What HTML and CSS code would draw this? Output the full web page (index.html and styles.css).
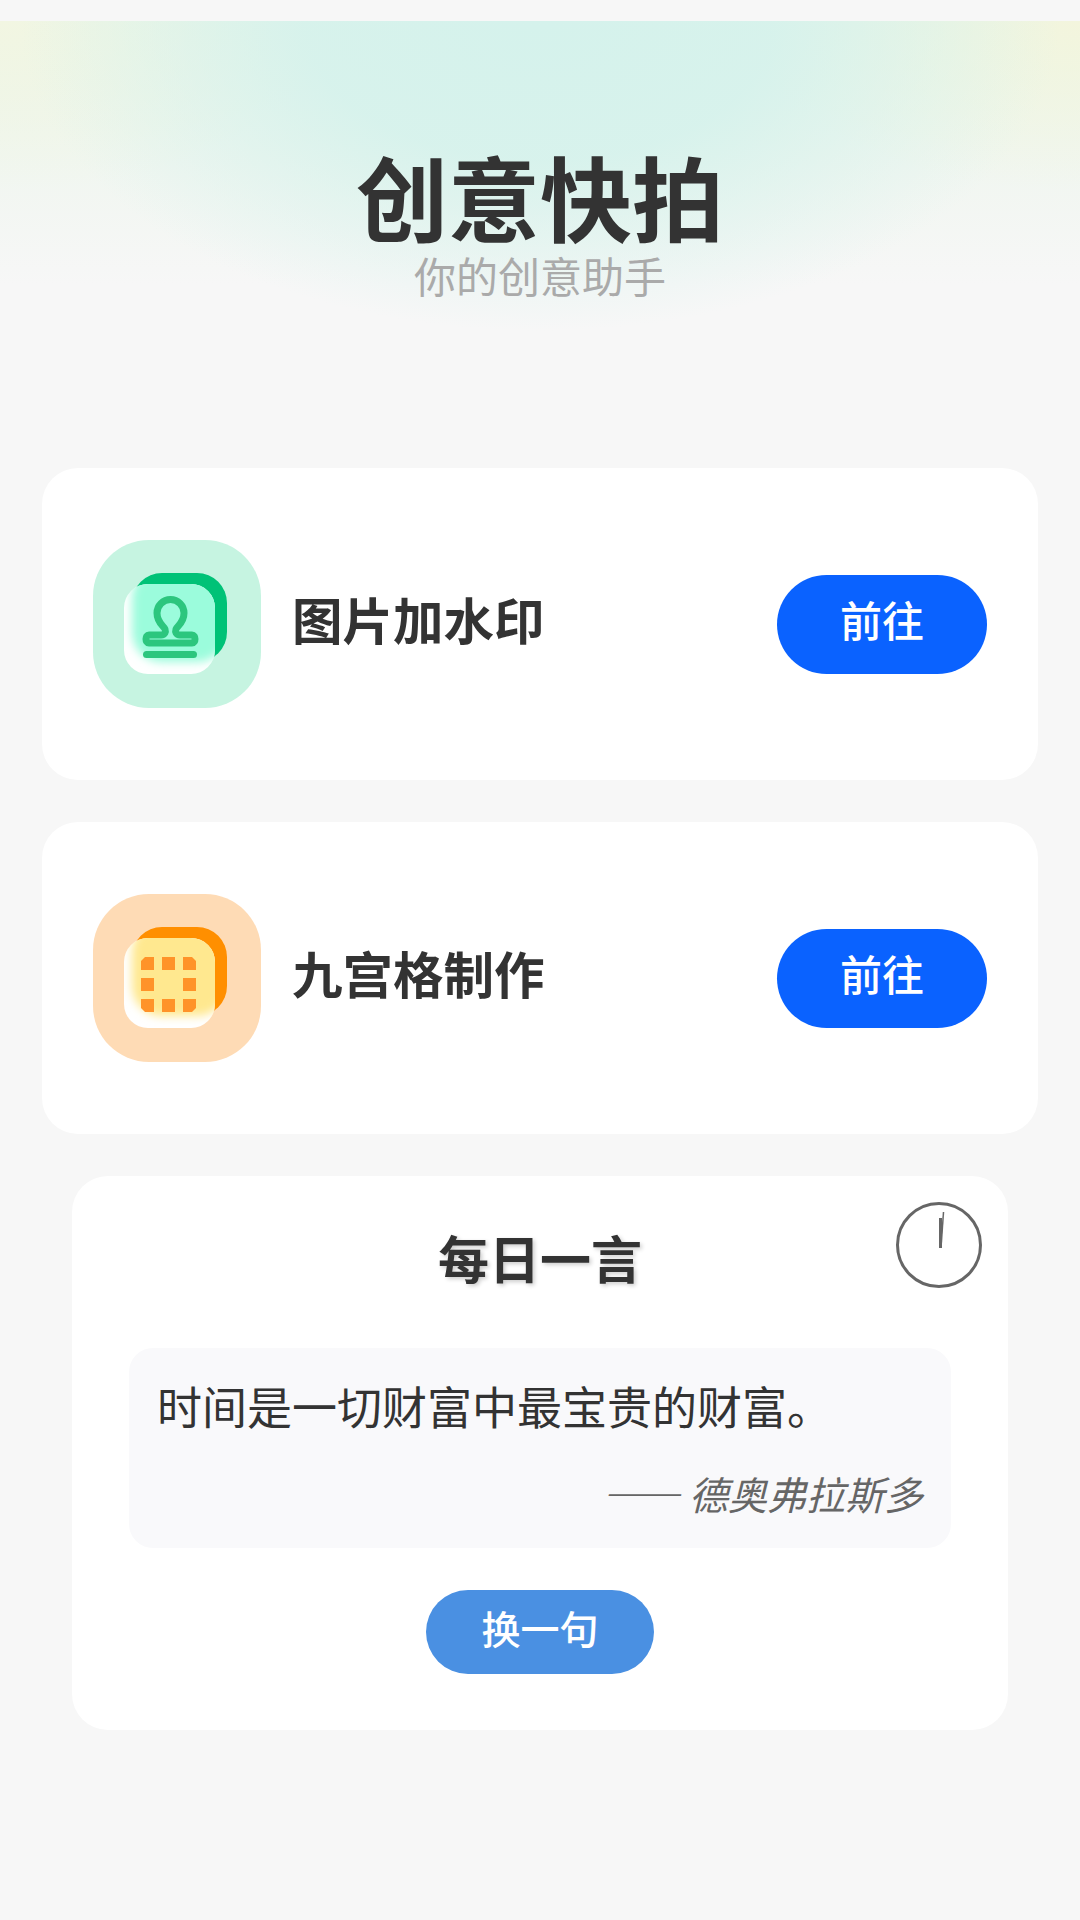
FILE: index.html
```html
<!DOCTYPE html>
<html lang="zh-CN">
<head>
    <meta charset="UTF-8">
    <meta name="viewport" content="width=device-width, initial-scale=1.0">
    <title>创意快拍</title>
    <link rel="stylesheet" href="styles.css">
</head>
<body>
    <div class="page">
        <header class="header">
            <h1 class="title">创意快拍</h1>
            <p class="subtitle">你的创意助手</p>
        </header>

        <section class="tool-card">
            <svg class="tool-icon" viewBox="0 0 168 168">
                <defs>
                    <clipPath id="frontClip"><rect x="31" y="44" width="91" height="90" rx="24"/></clipPath>
                    <filter id="soft" x="-20%" y="-20%" width="140%" height="140%"><feGaussianBlur stdDeviation="5"/></filter>
                </defs>
                <rect width="168" height="168" rx="56" fill="#c6f4e1"/>
                <rect x="39" y="33" width="95" height="89" rx="30" fill="#00c277"/>
                <rect x="31" y="44" width="91" height="90" rx="24" fill="#fff"/>
                <g clip-path="url(#frontClip)">
                    <rect x="39" y="28" width="95" height="94" rx="30" fill="#9bfcdc" filter="url(#soft)"/>
                </g>
                <path d="M56 95h12c4 0 5-3 4-6-1-3-8-6-8-16a13.5 13.5 0 0 1 27 0c0 10-7 13-8 16-1 3 0 6 4 6h12c2 0 3 2 3 4s-1 4-3 4H56c-2 0-3-2-3-4s1-4 3-4z" fill="none" stroke="#2cc67e" stroke-width="7"/>
                <rect x="50" y="111" width="54" height="7" rx="3.5" fill="#2cc67e"/>
            </svg>
            <span class="tool-name">图片加水印</span>
            <button class="go-btn">前往</button>
        </section>

        <section class="tool-card">
            <svg class="tool-icon" viewBox="0 0 168 168">
                <defs>
                    <clipPath id="frontClip2"><rect x="31" y="44" width="91" height="90" rx="24"/></clipPath>
                </defs>
                <rect width="168" height="168" rx="56" fill="#fedbb5"/>
                <rect x="39" y="33" width="95" height="89" rx="30" fill="#ff8f00"/>
                <rect x="31" y="44" width="91" height="90" rx="24" fill="#fff"/>
                <g clip-path="url(#frontClip2)">
                    <rect x="39" y="28" width="95" height="94" rx="30" fill="#ffe88f" filter="url(#soft)"/>
                </g>
                <g fill="#ff9329">
                    <path d="M52 63h9v13H48V67z"/>
                    <rect x="69" y="63" width="13" height="13"/>
                    <path d="M90 63h9l4 4v9H90z"/>
                    <rect x="48" y="84" width="13" height="13"/>
                    <rect x="90" y="84" width="13" height="13"/>
                    <path d="M48 105h13v13h-9l-4-4z"/>
                    <rect x="69" y="105" width="13" height="13"/>
                    <path d="M90 105h13v9l-4 4h-9z"/>
                </g>
            </svg>
            <span class="tool-name">九宫格制作</span>
            <button class="go-btn">前往</button>
        </section>

        <section class="quote-card">
            <svg class="clock" viewBox="0 0 88 88">
                <circle cx="44" cy="44" r="41.5" fill="none" stroke="#666" stroke-width="3"/>
                <path d="M45.5 47V17" stroke="#666" stroke-width="3" fill="none"/>
                <path d="M46 47L48.5 11" stroke="#666" stroke-width="1.5" fill="none"/>
            </svg>
            <h2 class="quote-title">每日一言</h2>
            <div class="quote-box">
                <p class="quote-text">时间是一切财富中最宝贵的财富。</p>
                <p class="quote-author">—— 德奥弗拉斯多</p>
            </div>
            <button class="next-btn">换一句</button>
        </section>
    </div>
</body>
</html>
```

FILE: styles.css
```css
* {
    box-sizing: border-box;
}
body {
    margin: 0;
    background-color: #f7f7f7;
    font-family: "Noto Sans CJK SC", "Noto Sans", sans-serif;
    color: #333;
}
.page {
    display: flex;
    flex-direction: column;
    padding-top: 21px;
}
.header {
    height: 447px;
    padding-top: 124px;
    text-align: center;
    background-image:
        radial-gradient(ellipse 520px 310px at 50% 0, #d5f2ec 0, rgba(213, 242, 236, 0.9) 45%, rgba(213, 242, 236, 0) 100%),
        radial-gradient(ellipse 330px 170px at 100% 0, #f3f5dd 0, rgba(243, 245, 221, 0) 100%),
        radial-gradient(ellipse 330px 170px at 0 0, #f2f6e2 0, rgba(242, 246, 226, 0) 100%),
        linear-gradient(to bottom, #e9f5e8 0, #f7f7f7 265px);
    background-repeat: no-repeat;
}
.title {
    margin: 0;
    font-size: 92px;
    line-height: 100px;
    font-weight: 700;
}
.subtitle {
    margin: 5px 0 0;
    font-size: 42px;
    line-height: 50px;
    color: #aaa;
}
.tool-card {
    display: flex;
    align-items: center;
    height: 312px;
    margin: 0 42px 42px;
    padding: 0 51px;
    background-color: #fff;
    border-radius: 36px;
}
.tool-icon {
    width: 168px;
    height: 168px;
    flex-shrink: 0;
}
.tool-name {
    margin: 0 0 12px 31px;
    font-size: 50.5px;
    font-weight: 700;
}
.go-btn {
    width: 210px;
    height: 99px;
    margin-left: auto;
    padding: 0 0 12px;
    border: none;
    border-radius: 50px;
    background-color: #0a62ff;
    color: #fff;
    font-family: inherit;
    font-size: 42px;
    font-weight: 500;
}
.quote-card {
    position: relative;
    display: flex;
    flex-direction: column;
    align-items: center;
    height: 554px;
    margin: 0 72px;
    padding-top: 45px;
    background-color: #fff;
    border-radius: 36px;
}
.clock {
    position: absolute;
    top: 25px;
    right: 25px;
    width: 88px;
    height: 88px;
}
.quote-title {
    margin: 0;
    font-size: 51px;
    line-height: 72px;
    font-weight: 700;
    text-shadow: 2px 2px 4px rgba(0, 0, 0, 0.2);
}
.quote-box {
    width: 822px;
    height: 200px;
    margin-top: 55px;
    padding: 28px 28px 0;
    background-color: #f9f9fb;
    border-radius: 24px;
}
.quote-text {
    margin: 0;
    font-size: 45px;
    line-height: 60px;
}
.quote-author {
    margin: 32px 0 0;
    text-align: right;
    font-size: 39px;
    line-height: 50px;
    font-style: italic;
    color: #666;
}
.next-btn {
    width: 228px;
    height: 84px;
    margin-top: 42px;
    padding: 0 0 10px;
    border: none;
    border-radius: 42px;
    background-color: #4a90e2;
    color: #fff;
    font-family: inherit;
    font-size: 39px;
    font-weight: 500;
}
```
